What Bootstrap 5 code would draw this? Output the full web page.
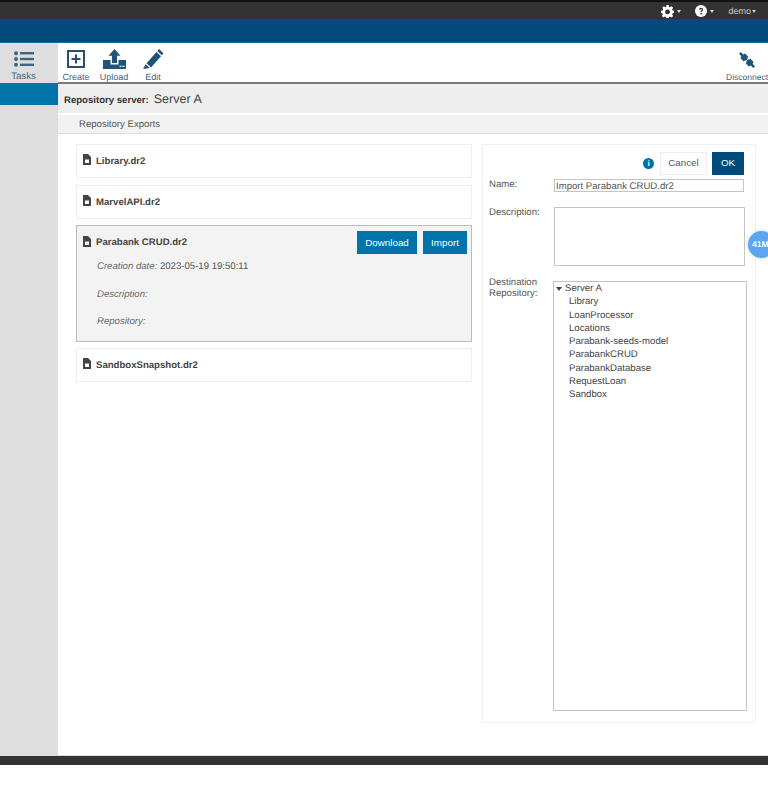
<!DOCTYPE html>
<html lang="en">
<head>
<meta charset="utf-8">
<title>Repository Exports</title>
<link rel="stylesheet" href="https://cdn.jsdelivr.net/npm/bootstrap@5.3.0/dist/css/bootstrap.min.css">
<style>
html,body{height:804px;overflow:hidden;background:#fff}
body{font-family:"Liberation Sans",Arial,sans-serif;font-size:9.6px;color:#444;text-rendering:geometricPrecision}
.app-top{height:19px;background:#333;border-top:2px solid #111;color:#ddd;padding-right:12px;padding-top:1px}
.app-top svg{display:block}
.top-item{display:flex;align-items:center;gap:3px}
.top-item.first{margin-right:14px}
.top-item.second{margin-right:14px}
.demo{font-size:9px;color:#ccc;gap:1px;padding-top:1px}
.caret-d{width:0;height:0;border-left:2.5px solid transparent;border-right:2.5px solid transparent;border-top:3px solid currentColor}
.app-blue{height:24px;background:#004a7c;border-bottom:1px solid #1a6c9c}
.app-main{height:712px}
.side-col{width:58px;flex:none;background:#dedede}
.task-tab{height:40px;width:47px;text-align:center;color:#3f6480;font-size:9.6px;line-height:11px;padding-top:8px}
.task-tab svg{display:block;margin:0 auto 4px}
.side-active{height:22px;background:#0073a8}
.main-col{flex:1;min-width:0}
.tool-row{height:41px;border-bottom:2px solid #777;overflow:hidden}
.tool-btn{text-align:center;color:#3f6480;font-size:9px;line-height:11px;padding-top:6px;white-space:nowrap}
.tool-btn svg{display:block;margin:0 auto 3px}
.t1{width:36px;padding-top:7px}
.t1 svg{margin-bottom:4px}
.t2{width:40px}
.t3{width:38px}
.t4{width:42px;font-size:8.5px}
.t4 svg{margin-top:3px;margin-bottom:4px}
.srv-bar{height:29px;background:#eee;padding:6px 0 0 6px;color:#333}
.srv-bar b{font-size:9.6px}
.srv-bar span{font-size:12.500px;margin-left:5px;color:#444}
.exp-head{height:19px;margin-top:2px;background:#f2f2f2;border-bottom:1px solid #ddd;padding:2px 0 0 21px;color:#555}
.work{position:relative;padding:10px 12px 0 18px;gap:10px}
.files{width:396px;flex:none;display:flex;flex-direction:column;gap:6px}
.file-item{height:34px;border:1px solid #eee;padding:2px 6px 0;display:flex;align-items:center;font-weight:700;color:#444}
.file-item:first-child{margin-bottom:1px}
.file-item svg{margin-right:5px;margin-top:-5px;flex:none}
.file-sel{height:117px;border:1px solid #bbb;background:#f3f3f3;padding:5px 4px 0 6px;display:block;font-weight:400}
.file-title{font-weight:700;height:23px}
.file-title svg{margin-top:-3px}
.file-title .nm{padding-top:2px}
.blue-act{background:#0073a8;color:#fff;font-size:9.800px;height:23px;line-height:23px;padding:0;border:0;border-radius:0}
.act-a{width:60px;margin-right:6px}
.act-b{width:44px}
.meta{margin:0 0 15.500px 14px;line-height:12px;color:#555}
.meta-first{margin-top:7px}
.meta i{color:#666}
.form-panel{width:274px;flex:none;height:579px;border:1px solid #f0f0f0;padding:7px 11px 0 6px}
.panel-top{height:23px;gap:5px}
.inf{width:11px;height:11px;border-radius:50%;background:#0073a8;color:#fff;font-size:8px;font-weight:700;line-height:11px;text-align:center;margin-right:1px}
.btn-cancel{width:47px;height:23px;padding:0;font-size:9.800px;color:#555;background:#fff;border:1px solid #eee;border-radius:0}
.btn-ok{width:32px;height:23px;padding:0;font-size:9.800px;color:#fff;background:#004a7c;border:0;border-radius:0}
.lbl{width:64px;flex:none;line-height:12px;color:#555}
.lbl-tall{line-height:11px;margin-top:-4px}
.in-name{width:190px;height:13px;flex:none;border:1px solid #c4c4c4;background:#fff;line-height:11px;padding:1px 0 0 1px;color:#555;margin-left:1px}
.in-desc{width:191px;height:59px;flex:none;border:1px solid #c4c4c4;background:#fff;margin-left:1px}
.tree-box{width:194px;height:430px;flex:none;border:1px solid #c4c4c4;background:#fff;padding:0 0 0 2px;line-height:13.300px;color:#444}
.tree-root{display:flex;align-items:center;gap:3px}
.tree-root .caret-d{border-left-width:3px;border-right-width:3px;border-top-width:4px}
.tree-sub{padding-left:13px}
.f-row1{margin-top:4px}
.f-row2{margin-top:15px}
.f-row3{margin-top:15px}
.bubble{position:absolute;left:690px;top:97px;width:27px;height:27px;border-radius:50%;background:#5aa6f0;color:#fff;font-size:8.500px;font-weight:700;line-height:27px;padding-left:4px;white-space:nowrap;overflow:hidden;box-shadow:0 0 4px rgba(0,0,0,.2)}
.app-foot{height:10px;background:#333;border-top:1px solid #ddd}
</style>
</head>
<body>
<div class="app-top d-flex justify-content-end align-items-center">
  <div class="top-item first"><svg width="13" height="13" viewBox="0 0 16 16" fill="#fff"><path fill-rule="evenodd" d="M6.6 0h2.8l.4 2.2 1.4.6L13 1.5l2 2-1.3 1.8.6 1.4 2.2.4v2.8l-2.2.4-.6 1.4 1.3 1.8-2 2-1.8-1.3-1.4.6-.4 2.2H6.600l-.4-2.2-1.4-.6L3 15.500l-2-2 1.300-1.800-.6-1.400L0 9.900V7.100l2.200-.4.6-1.400L1.500 3.500l2-2 1.800 1.300 1.400-.6zM8 5.500a3 3 0 1 0 0 6 3 3 0 0 0 0-6z"/></svg><span class="caret-d"></span></div>
  <div class="top-item second"><svg width="12" height="12" viewBox="0 0 16 16"><circle cx="8" cy="8" r="8" fill="#fff"/><path d="M5.200 6a2.900 2.900 0 0 1 5.700.3c0 1.800-2 1.900-2 3.300H7.100c0-2.200 2-2.200 2-3.400 0-1.200-1.800-1.100-2 .1zM7.100 10.600h1.900v1.900H7.100z" fill="#333"/></svg><span class="caret-d"></span></div>
  <div class="top-item demo">demo<span class="caret-d"></span></div>
</div>
<div class="app-blue"></div>
<div class="app-main d-flex">
  <div class="side-col">
    <div class="task-tab"><svg width="20" height="16" viewBox="0 0 20 16" fill="#3f6480"><circle cx="2" cy="2.200" r="2"/><circle cx="2" cy="8" r="2"/><circle cx="2" cy="13.800" r="2"/><rect x="6" y="1" width="14" height="2.400"/><rect x="6" y="6.800" width="14" height="2.400"/><rect x="6" y="12.600" width="14" height="2.400"/></svg>Tasks</div>
    <div class="side-active"></div>
  </div>
  <div class="main-col d-flex flex-column">
    <div class="tool-row d-flex">
      <div class="tool-btn t1"><svg width="18" height="18" viewBox="0 0 18 18"><rect x="1" y="1" width="16" height="16" fill="none" stroke="#27506f" stroke-width="2"/><path d="M8 4.500h2V8h3.500v2H10v3.500H8V10H4.500V8H8z" fill="#27506f"/></svg>Create</div>
      <div class="tool-btn t2"><svg width="23" height="20" viewBox="0 0 23 20" fill="#1f5379"><path d="M11.500 0l6 6.800H14v7.200H9V6.800H5.500z"/><path fill-rule="evenodd" d="M0 11h7.500v4.500h8V11H23v9H0zM16.500 16.800h2v1.300h-2zM19.500 16.800h2v1.300h-2z"/></svg>Upload</div>
      <div class="tool-btn t3"><svg width="21" height="20" viewBox="0 0 21 20" fill="#1f5379"><path d="M16 0l4.500 4.200-1.700 2-4.500-4.200zM13.500 3l4.500 4.200-10 11.300-4.500-4.200zM2.700 15.200l4 3.800L0 20z"/></svg>Edit</div>
      <div class="flex-grow-1"></div>
      <div class="tool-btn t4"><svg width="16" height="16" viewBox="0 0 16 16" fill="#1f5379"><path d="M1.800 0l2.400 2.400L6 1.400 9.400 4.800 8 6.200 9.800 8 8 9.800 6.200 8 4.800 9.400 1.400 6l1-1.800L0 1.800z"/><path d="M14.200 16l-2.400-2.400-1.800 1-3.400-3.400 1.400-1.400L6.200 8 8 6.200 9.800 8l1.400-1.400 3.400 3.400-1 1.800 2.400 2.400z" /><path d="M5.500 10.500l5-5" stroke="#fff" stroke-width=".8"/></svg>Disconnect</div>
    </div>
    <div class="srv-bar d-flex align-items-baseline"><b>Repository server:</b><span>Server A</span></div>
    <div class="exp-head d-flex align-items-center">Repository Exports</div>
    <div class="work d-flex flex-grow-1">
      <div class="files">
        <div class="file-item"><svg width="8" height="11" viewBox="0 0 8 11" fill="#444"><path fill-rule="evenodd" d="M0 0h5l3 3v8H0zM2 5.500v3.500h4V5.500z"/></svg>Library.dr2</div>
        <div class="file-item"><svg width="8" height="11" viewBox="0 0 8 11" fill="#444"><path fill-rule="evenodd" d="M0 0h5l3 3v8H0zM2 5.500v3.500h4V5.500z"/></svg>MarvelAPI.dr2</div>
        <div class="file-item file-sel">
          <div class="file-title d-flex align-items-center"><svg width="8" height="11" viewBox="0 0 8 11" fill="#444"><path fill-rule="evenodd" d="M0 0h5l3 3v8H0zM2 5.500v3.500h4V5.500z"/></svg><span class="nm">Parabank CRUD.dr2</span><span class="flex-grow-1"></span><button class="btn blue-act act-a">Download</button><button class="btn blue-act act-b">Import</button></div>
          <div class="meta meta-first"><i>Creation date:</i> 2023-05-19 19:50:11</div>
          <div class="meta"><i>Description:</i></div>
          <div class="meta"><i>Repository:</i></div>
        </div>
        <div class="file-item"><svg width="8" height="11" viewBox="0 0 8 11" fill="#444"><path fill-rule="evenodd" d="M0 0h5l3 3v8H0zM2 5.500v3.500h4V5.500z"/></svg>SandboxSnapshot.dr2</div>
      </div>
      <div class="form-panel">
        <div class="panel-top d-flex justify-content-end align-items-center"><span class="inf">i</span><button class="btn btn-cancel">Cancel</button><button class="btn btn-ok">OK</button></div>
        <div class="d-flex f-row1"><div class="lbl">Name:</div><div class="in-name">Import Parabank CRUD.dr2</div></div>
        <div class="d-flex f-row2"><div class="lbl">Description:</div><div class="in-desc"></div></div>
        <div class="d-flex f-row3"><div class="lbl lbl-tall">Destination Repository:</div>
          <div class="tree-box">
            <div class="tree-root"><span class="caret-d"></span>Server A</div>
            <div class="tree-sub">Library</div>
            <div class="tree-sub">LoanProcessor</div>
            <div class="tree-sub">Locations</div>
            <div class="tree-sub">Parabank-seeds-model</div>
            <div class="tree-sub">ParabankCRUD</div>
            <div class="tree-sub">ParabankDatabase</div>
            <div class="tree-sub">RequestLoan</div>
            <div class="tree-sub">Sandbox</div>
          </div>
        </div>
      </div>
      <div class="bubble">41M</div>
    </div>
  </div>
</div>
<div class="app-foot"></div>
<script src="https://cdn.jsdelivr.net/npm/bootstrap@5.3.0/dist/js/bootstrap.bundle.min.js"></script>
</body>
</html>
